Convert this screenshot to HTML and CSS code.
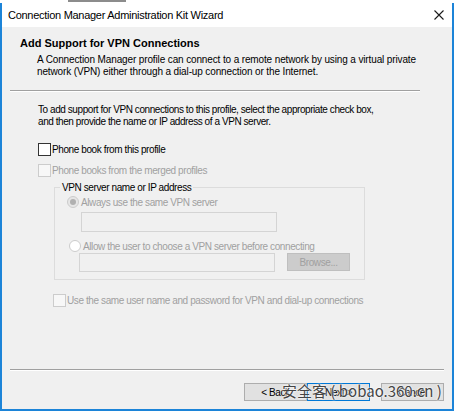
FILE: index.html
```html
<!DOCTYPE html>
<html lang="en">
<head>
  <meta charset="UTF-8" />
  <title>Connection Manager Administration Kit Wizard</title>
  <link rel="stylesheet" href="styles.css">
</head>
<body>

  <div class="window">
    <div class="behind"></div>

    <div class="titlebar">
      <span class="title">Connection Manager Administration Kit Wizard</span>
      <svg class="close" width="10" height="10" viewBox="0 0 10 10">
        <path d="M0.5 0.5 L9.5 9.5 M9.5 0.5 L0.5 9.5" stroke="#1a1a1a" stroke-width="1.1" fill="none"/>
      </svg>
    </div>

    <div class="client">
      <div class="header">
        <h1>Add Support for VPN Connections</h1>
        <p class="desc">A Connection Manager profile can connect to a remote network by using a virtual private<br>network (VPN) either through a dial-up connection or the Internet.</p>
      </div>

      <div class="sep short"></div>

      <div class="page">
        <p class="intro">To add support for VPN connections to this profile, select the appropriate check box,<br>and then provide the name or IP address of a VPN server.</p>

        <label class="check first"><span class="box"></span>Phone book from this profile</label>
        <label class="check disabled"><span class="box"></span>Phone books from the merged profiles</label>

        <div class="group">
          <span class="legend">VPN server name or IP address</span>
          <label class="radio disabled one"><span class="dot checked"></span>Always use the same VPN server</label>
          <div class="field one"></div>
          <label class="radio disabled two"><span class="dot"></span>Allow the user to choose a VPN server before connecting</label>
          <div class="row">
            <div class="field two"></div>
            <div class="browse">Browse...</div>
          </div>
        </div>

        <label class="check disabled last"><span class="box"></span>Use the same user name and password for VPN and dial-up connections</label>
      </div>

      <div class="sep long"></div>

      <div class="buttons">
        <div class="btn">&lt; Back</div>
        <div class="btn default">Next &gt;</div>
        <div class="btn cancel">Cancel</div>
      </div>
    </div>

    <div class="watermark">安全客 ( bobao.360.cn )</div>
  </div>

</body>
</html>
```

FILE: styles.css
```css
body {
  margin: 0;
  font-family: "Liberation Sans", Arial, sans-serif;
  font-size: 10px;
  letter-spacing: -0.4px;
  color: #000;
}
.window {
  position: relative;
  width: 454px;
  height: 411px;
  display: flex;
  flex-direction: column;
  background: #f0f0f0;
  overflow: hidden;
}
.behind {
  height: 3px;
  background: linear-gradient(to right, #fff 68px, #8c8c8c 68px, #8c8c8c 126px, #fff 126px);
  background-size: 100% 2px;
  background-repeat: no-repeat;
  background-color: #fff;
}
.titlebar {
  height: 24px;
  background: #fff;
  display: flex;
  align-items: center;
  padding: 0 8px 1px 6px;
  box-sizing: border-box;
  border-left: 2px solid #1c84d8;
  border-right: 2px solid #1c84d8;
}
.title {
  flex: 1;
  font-size: 11px;
  letter-spacing: -0.28px;
  color: #000;
}
.client {
  flex: 1;
  display: flex;
  flex-direction: column;
  border: 2px solid #1c84d8;
  border-top: none;
}
.header {
  padding: 9px 0 0 18px;
  height: 54px;
}
h1 {
  margin: 0;
  font-size: 11px;
  font-weight: bold;
  letter-spacing: 0;
  line-height: 14px;
}
.desc {
  margin: 4px 0 0 17px;
  line-height: 12px;
  letter-spacing: -0.13px;
}
.sep {
  height: 1px;
  background: #a0a0a0;
  border-bottom: 1px solid #fff;
  margin-left: 8px;
}
.sep.short {
  width: 410px;
}
.sep.long {
  width: 434px;
  margin-top: auto;
}
.page {
  padding: 12px 0 0 36px;
}
.intro {
  margin: 0;
  line-height: 12px;
  letter-spacing: -0.43px;
}
.check {
  display: flex;
  align-items: center;
  height: 13px;
}
.check.first {
  margin-top: 15px;
}
.check.disabled {
  margin-top: 8px;
  color: #a0a0a0;
}
.check.last {
  margin: 14px 0 0 15px;
}
.box {
  width: 11px;
  height: 11px;
  border: 1px solid #333;
  background: #fff;
  margin-right: 1px;
}
.disabled .box {
  border-color: #cccccc;
  background: #f7f7f7;
}
.group {
  position: relative;
  margin: 10px 0 0 16px;
  width: 311px;
  height: 93px;
  border: 1px solid #dcdcdc;
  box-sizing: border-box;
  padding: 8px 0 0 12px;
}
.legend {
  position: absolute;
  top: -7px;
  left: 5px;
  padding: 0 2px;
  background: #f0f0f0;
  line-height: 13px;
}
.radio {
  display: flex;
  align-items: center;
  height: 12px;
  color: #a0a0a0;
}
.radio.two {
  margin: 8px 0 0 2px;
}
.dot {
  width: 10px;
  height: 10px;
  border: 1px solid #cccccc;
  border-radius: 50%;
  background: #fff;
  margin-right: 2px;
  display: flex;
  align-items: center;
  justify-content: center;
}
.dot.checked {
  background: #e6e6e6;
}
.dot.checked::after {
  content: "";
  width: 6px;
  height: 6px;
  border-radius: 50%;
  background: #b0b0b0;
}
.field {
  height: 20px;
  width: 196px;
  box-sizing: border-box;
  border: 1px solid #d4d4d4;
  background: #f0f0f0;
}
.field.one {
  margin: 4px 0 0 14px;
}
.row {
  display: flex;
  margin: 1px 0 0 12px;
  gap: 12px;
}
.field.two {
  height: 19px;
}
.browse {
  width: 63px;
  height: 18px;
  box-sizing: border-box;
  border: 1px solid #bfbfbf;
  background: #cccccc;
  color: #a0a0a0;
  display: flex;
  align-items: center;
  justify-content: center;
}
.buttons {
  display: flex;
  justify-content: flex-end;
  padding: 12px 8px 0 0;
  height: 38px;
  box-sizing: border-box;
}
.btn {
  width: 63px;
  height: 18px;
  box-sizing: border-box;
  border: 1px solid #adadad;
  background: #e1e1e1;
  display: flex;
  align-items: center;
  justify-content: center;
}
.btn.default {
  border: 1px solid #0078d7;
}
.btn.cancel {
  margin-left: 11px;
}
.watermark {
  position: absolute;
  left: 282px;
  top: 381px;
  font-family: "Noto Sans CJK SC", "Liberation Sans", sans-serif;
  font-size: 15px;
  letter-spacing: 0;
  line-height: 20px;
  color: #444;
  text-shadow: 0 0 2px #fff, 0 0 2px #fff;
  white-space: nowrap;
}
```
